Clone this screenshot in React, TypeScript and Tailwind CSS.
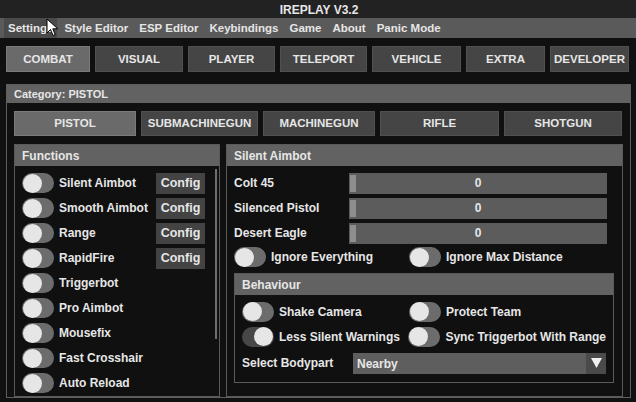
import React from "react"

const menu = ["Settings", "Style Editor", "ESP Editor", "Keybindings", "Game", "About", "Panic Mode"]

const tabs = [
    { name: "COMBAT", w: "w-[84px]", active: true },
    { name: "VISUAL", w: "w-[88px]" },
    { name: "PLAYER", w: "w-[87px]" },
    { name: "TELEPORT", w: "w-[87px]" },
    { name: "VEHICLE", w: "w-[89px]" },
    { name: "EXTRA", w: "w-[79px]" },
    { name: "DEVELOPER", w: "w-[79px]" },
]

const weapons = [
    { name: "PISTOL", w: "w-[122px]", active: true },
    { name: "SUBMACHINEGUN", w: "w-[117px]" },
    { name: "MACHINEGUN", w: "w-[112px]" },
    { name: "RIFLE", w: "w-[119px]" },
    { name: "SHOTGUN", w: "w-[118px]" },
]

const functions = [
    { name: "Silent Aimbot", config: true },
    { name: "Smooth Aimbot", config: true },
    { name: "Range", config: true },
    { name: "RapidFire", config: true },
    { name: "Triggerbot" },
    { name: "Pro Aimbot" },
    { name: "Mousefix" },
    { name: "Fast Crosshair" },
    { name: "Auto Reload" },
]

const Toggle = ({ on = false }: { on?: boolean }) => (
    <div className={`w-[32px] h-[20px] rounded-full flex items-center px-[1px] shrink-0 ${on ? "bg-[#474747] justify-end" : "bg-[#6c6c6c] justify-start"}`}>
        <div className="w-[19px] h-[19px] rounded-full bg-[#e6e6e6]" />
    </div>
)

const Slider = ({ label }: { label: string }) => (
    <div className="flex items-center h-[21px]">
        <div className="w-[115px]">{label}</div>
        <div className="relative w-[258px] h-[21px] bg-[#5c5c5c] flex items-center justify-center">
            <div className="absolute left-[1px] top-[2px] w-[6px] h-[17px] bg-[#8e8e8e]" />
            <span>0</span>
        </div>
    </div>
)

const App = () => {
    return (
        <div className="relative w-[636px] h-[402px] overflow-hidden bg-[#101011] text-[#e6e6e6] font-['Liberation_Sans',Arial,sans-serif] font-bold text-[12px] flex flex-col">

            {/* TITLE */}
            <div className="h-[18px] shrink-0 bg-[#222223] flex items-center justify-center pl-[2px] pt-[1px]">IREPLAY V3.2</div>

            {/* MENU */}
            <div className="h-[20px] shrink-0 bg-[#5a5a5a] flex items-center px-[4px] text-[11.5px]">
                {menu.map((m, i) => (
                    <div key={m} className={`h-full flex items-center px-[4px] mr-[3px] pt-[2px] ${i === 0 ? "bg-[#4a4a4a]" : ""}`}>{m}</div>
                ))}
            </div>

            {/* TABS */}
            <div className="mt-[8px] h-[26px] shrink-0 flex gap-[5px] px-[6px] text-[11.5px]">
                {tabs.map(t => (
                    <div key={t.name} className={`${t.w} h-full flex items-center justify-center pt-[1px] border ${t.active ? "bg-[#6a6a6a] border-[#7a7a7a]" : "bg-[#454545] border-[#505050]"}`}>{t.name}</div>
                ))}
            </div>

            {/* MAIN PANEL */}
            <div className="mt-[12px] ml-[6px] w-[625px] h-[314px] shrink-0 border border-[#5e5e5e] flex flex-col">
                <div className="h-[20px] bg-[#626262] flex items-center pl-[7px] pt-[1px] text-[11px]">Category: PISTOL</div>

                <div className="flex-1 flex flex-col px-[7px] pt-[8px] pb-[5px]">
                    <div className="h-[25px] flex gap-[5px] text-[11.5px]">
                        {weapons.map(w => (
                            <div key={w.name} className={`${w.w} h-full flex items-center justify-center pt-[1px] border ${w.active ? "bg-[#6a6a6a] border-[#7a7a7a]" : "bg-[#454545] border-[#505050]"}`}>{w.name}</div>
                        ))}
                    </div>

                    <div className="mt-[8px] flex-1 flex gap-[6px]">
                        {/* FUNCTIONS */}
                        <div className="w-[206px] border border-[#5a5a5a] flex flex-col">
                            <div className="h-[21px] bg-[#626262] flex items-center pl-[7px] pt-[1px]">Functions</div>
                            <div className="relative flex-1 overflow-hidden pl-[7px] pt-[5px]">
                                {functions.map(f => (
                                    <div key={f.name} className="h-[25px] flex items-center">
                                        <Toggle />
                                        <div className="ml-[5px] w-[97px] whitespace-nowrap">{f.name}</div>
                                        {f.config && (
                                            <div className="w-[49px] h-[21px] bg-[#434343] flex items-center justify-center text-[12.5px]">Config</div>
                                        )}
                                    </div>
                                ))}
                                <div className="absolute right-[2px] top-[3px] w-[2px] h-[170px] bg-[#6e6e6e]" />
                            </div>
                        </div>

                        {/* SILENT AIMBOT */}
                        <div className="flex-1 border border-[#5a5a5a] flex flex-col">
                            <div className="h-[21px] bg-[#626262] flex items-center pl-[7px] pt-[1px]">Silent Aimbot</div>
                            <div className="flex-1 flex flex-col px-[7px] pt-[7px]">
                                <div className="flex flex-col gap-[4px]">
                                    <Slider label="Colt 45" />
                                    <Slider label="Silenced Pistol" />
                                    <Slider label="Desert Eagle" />
                                </div>
                                <div className="mt-[3px] h-[21px] flex items-center whitespace-nowrap">
                                    <Toggle />
                                    <div className="ml-[5px] w-[138px]">Ignore Everything</div>
                                    <Toggle />
                                    <div className="ml-[5px]">Ignore Max Distance</div>
                                </div>

                                {/* BEHAVIOUR */}
                                <div className="mt-[5px] w-[380px] border border-[#5a5a5a] flex flex-col">
                                    <div className="h-[21px] bg-[#626262] flex items-center pl-[7px] pt-[1px]">Behaviour</div>
                                    <div className="flex flex-col px-[7px] pt-[7px] pb-[8px] whitespace-nowrap">
                                        <div className="flex flex-col gap-[5px]">
                                            <div className="h-[20px] flex items-center">
                                                <Toggle />
                                                <div className="ml-[5px] w-[130px]">Shake Camera</div>
                                                <Toggle />
                                                <div className="ml-[5px]">Protect Team</div>
                                            </div>
                                            <div className="h-[20px] flex items-center">
                                                <Toggle on />
                                                <div className="ml-[5px] w-[130px]">Less Silent Warnings</div>
                                                <Toggle />
                                                <div className="ml-[5px]">Sync Triggerbot With Range</div>
                                            </div>
                                        </div>
                                        <div className="mt-[6px] h-[21px] flex items-center">
                                            <div className="w-[111px]">Select Bodypart</div>
                                            <div className="w-[253px] h-[21px] bg-[#5e5e5e] flex items-center">
                                                <div className="flex-1 pl-[4px] pt-[2px]">Nearby</div>
                                                <div className="w-[20px] h-full bg-[#4a4a4a] flex items-center justify-center">
                                                    <svg width="11" height="10" viewBox="0 0 11 10"><path d="M0 0 H11 L5.5 10 Z" fill="#f0f0f0" /></svg>
                                                </div>
                                            </div>
                                        </div>
                                    </div>
                                </div>
                            </div>
                        </div>
                    </div>
                </div>
            </div>

            {/* CURSOR */}
            <svg className="absolute left-[46px] top-[18px]" width="13" height="19" viewBox="0 0 13 19">
                <path d="M1 1 V15 L4.5 11.5 L7 17.5 L9.2 16.6 L6.8 10.8 H11.8 Z" fill="#ffffff" stroke="#000000" strokeWidth="1" />
            </svg>
        </div>
    )
}

export default App
